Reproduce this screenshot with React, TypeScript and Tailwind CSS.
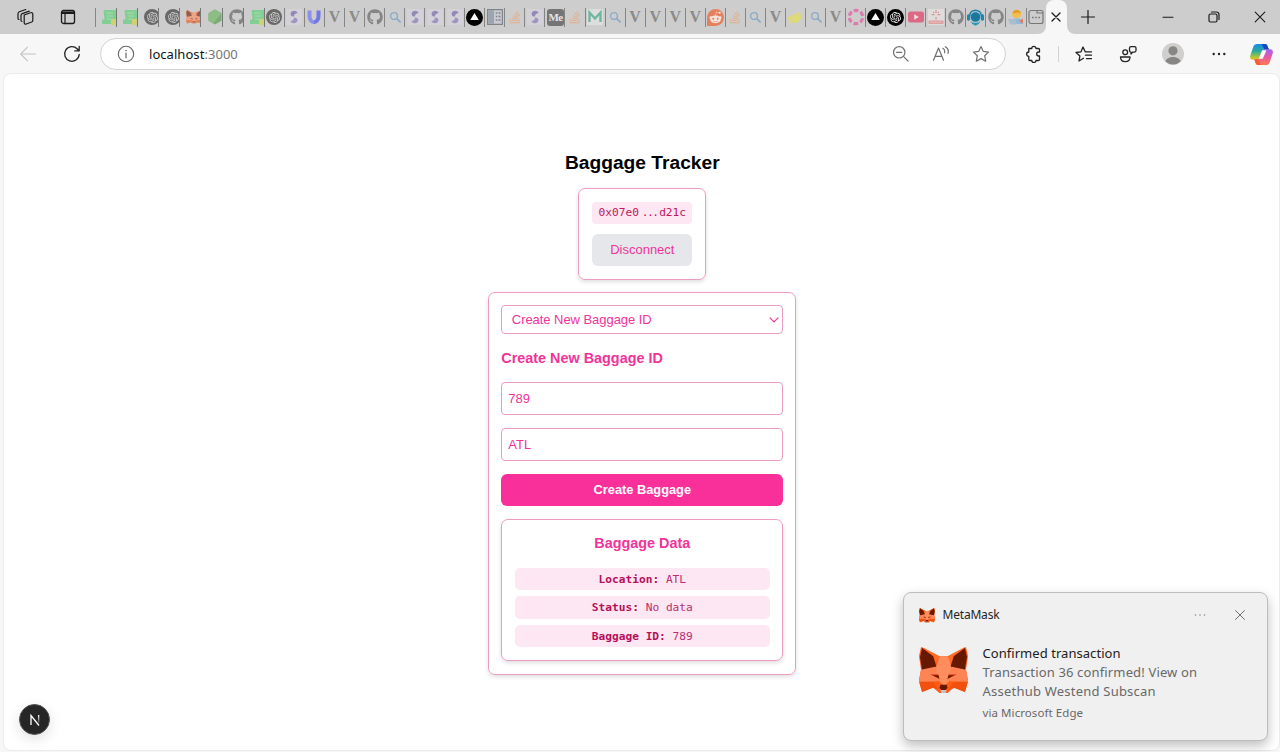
import React from 'react';
import { FaGithub, FaRedditAlien, FaStackOverflow } from 'react-icons/fa';
import { SiOpenai } from 'react-icons/si';

const line = { fill: 'none', stroke: 'currentColor', strokeLinecap: 'round', strokeLinejoin: 'round' } as const;

function Fox({ className }: { className: string }) {
  return (
    <svg viewBox="0 0 48 46" preserveAspectRatio="none" className={className}>
      <path d="M2 0 20 9h9L46 0l2 9-2 13 2 10-3 12-11-4-6 5h-8l-6-5-11 4L0 32l2-10L0 9z" fill="#ff5c16" />
      <path d="M20 9h9l3 13-3 12-4 4-5-4-4-12z" fill="#ff8d5d" />
      <path d="m2 22 14-3 5 14-9 1H0zM46 22l-14-3-5 14 9 1h12z" fill="#ff8455" />
      <path d="m0 34 14 0 5 7-6-1-10 4zM48 34l-14 0-5 7 6-1 10 4z" fill="#f2500f" />
      <path d="m3 0 17 9-5 8zM45 0 28 9l5 8z" fill="#ff6a25" />
      <path d="m3 1-2 9 2 12 14-3-3-10zM45 1l2 9-2 12-14-3 3-10z" fill="#661800" />
      <path d="m11 27 8 0 1 4zM37 27l-8 0-1 4z" fill="#b83205" />
      <path d="m14 28 5 0 1 3zM34 28l-5 0-1 3z" fill="#661800" />
      <path d="M21 37h6l1 3-2 2h-4l-2-2z" fill="#661800" />
      <path d="M21 42h6l-1 3h-4z" fill="#c0c4cd" />
    </svg>
  );
}

function Vercel() {
  return (
    <svg viewBox="0 0 16 16" className="size-4.25 shrink-0">
      <circle cx="8" cy="8" r="8" fill="#000" />
      <path d="m8 3.8 4 6.6H4z" fill="#fff" />
    </svg>
  );
}

function Search() {
  return (
    <svg viewBox="0 0 16 16" className="size-4 shrink-0 text-[#8babc8]">
      <circle cx="7" cy="7" r="3.4" {...line} strokeWidth="1.4" />
      <path d="m9.7 9.7 3.4 3.2" {...line} strokeWidth="1.8" />
    </svg>
  );
}

function Script() {
  return (
    <svg viewBox="0 0 16 16" className="size-4 shrink-0">
      <path d="M1.500 1H14v14H0v-4l2.500-1z" fill="#82ce93" />
      <path d="M4 4h7M5 7h6M5 10h4" stroke="#a5dbaf" strokeWidth="1" />
      <path d="M9 10h6v6H9z" fill="#d0d176" />
    </svg>
  );
}

function Swirl() {
  return (
    <svg viewBox="0 0 16 16" className="size-4 shrink-0">
      <path d="M0 0h16v16H0z" fill="#d4d2d8" />
      <path d="M11.600 4C10.600 1 5 1 4.600 4.400c-.3 2.300 1.400 3.200 3.400 3.200 0-2 1-3.200 3.600-3.600z" fill="#928bb8" />
      <path d="M4.400 12c1 3 6.600 3 7-.4.3-2.300-1.400-3.200-3.400-3.200 0 2-1 3.200-3.600 3.600z" fill="#9c95c2" />
    </svg>
  );
}

function Favicon({ name }: { name: string }) {
  switch (name) {
    case 'script':
      return <Script />;
    case 'openai':
      return (
        <span className="flex size-4 shrink-0 items-center justify-center rounded-full bg-[#686868] text-[#d3d3d3]">
          <SiOpenai size={11} />
        </span>
      );
    case 'openai-dark':
      return (
        <span className="flex size-4.25 shrink-0 items-center justify-center rounded-full bg-black text-white">
          <SiOpenai size={11} />
        </span>
      );
    case 'fox':
      return <Fox className="h-3.5 w-4 shrink-0 opacity-60" />;
    case 'node':
      return (
        <svg viewBox="0 0 16 16" className="size-4 shrink-0">
          <path d="m8 .5 6.500 3.700v7.600L8 15.500l-6.500-3.700V4.200z" fill="#7dab76" />
          <path d="m8 .5 6.500 3.700L6 14.400l-4.500-2.600V4.200z" fill="#8dbc85" />
        </svg>
      );
    case 'github':
      return <FaGithub size={16} className="shrink-0 text-[#858585]" />;
    case 'swirl':
      return <Swirl />;
    case 'u':
      return (
        <svg viewBox="0 0 16 16" className="size-4 shrink-0">
          <path d="M1.500 1.500h4v6c0 2 .8 3 2.500 4v3.500C4 14.400 1.500 11.500 1.500 7z" fill="#8a91e6" />
          <path d="M14.500 1.500h-4v6c0 2-.8 3-2.500 4v3.500c4-.6 6.500-3.500 6.500-8z" fill="#7078e2" />
        </svg>
      );
    case 'v':
      return <span className="font-['Liberation_Serif',serif] text-[16px] leading-4 font-bold text-[#8a8a8a]">V</span>;
    case 'search':
      return <Search />;
    case 'vercel':
      return <Vercel />;
    case 'panel':
      return (
        <svg viewBox="0 0 16 16" className="size-4 shrink-0">
          <path d="M.6.6h14.800v14.800H.6z" fill="#c8cbd0" stroke="#7f848b" strokeWidth="1.200" />
          <path d="M1.200 1.200H7v13.600H1.200z" fill="#9ba5b0" />
          <path d="M8.800 4h1.500M8.800 7.500h1.500M8.800 11h1.500M11.500 4h2M11.500 7.500h2M11.500 11h2" stroke="#7f848b" strokeWidth="1.300" />
        </svg>
      );
    case 'stack':
      return <FaStackOverflow size={14} className="shrink-0 text-[#dcb597]" />;
    case 'medium':
      return (
        <span className="ml-px flex size-4.25 shrink-0 items-center justify-center rounded-[3px] bg-[#757575] font-['Liberation_Serif',serif] text-[11px] leading-4 font-bold tracking-[-0.600px] text-[#e6e6e6]">
          Me
        </span>
      );
    case 'moralis':
      return (
        <svg viewBox="0 0 16 16" className="size-4 shrink-0">
          <path d="M0 0h16v16H0z" fill="#dedede" />
          <path d="M2.500 13V3.500L8 9.500l5.500-6V13" fill="none" stroke="#70b7a2" strokeWidth="2.400" />
        </svg>
      );
    case 'reddit':
      return (
        <span className="flex size-4.25 shrink-0 items-center justify-center rounded-full rounded-bl-[3px] bg-[#e3815f] text-[#f6e5df]">
          <FaRedditAlien size={13} />
        </span>
      );
    case 'note':
      return (
        <svg viewBox="0 0 16 16" className="size-4 shrink-0">
          <path d="m1 8 12-5.500L14.500 9 10 14l-8-.5z" fill="#ddd780" />
          <path d="m6 7 8 1-4 6z" fill="#e0dc74" />
        </svg>
      );
    case 'polkadot':
      return (
        <svg viewBox="0 0 18 18" className="size-4.5 shrink-0">
          <circle cx="9" cy="9" r="6.700" fill="none" stroke="#e07aac" strokeWidth="3.200" strokeDasharray="4.700 2.316" transform="rotate(-110 9 9)" />
        </svg>
      );
    case 'youtube':
      return (
        <svg viewBox="0 0 16 16" className="size-4 shrink-0">
          <rect y="2.500" width="16" height="11" rx="2.500" fill="#dc6a85" />
          <path d="m6.200 5.300 4.600 2.700-4.600 2.700z" fill="#f3dce1" />
        </svg>
      );
    case 'target':
      return (
        <svg viewBox="0 0 16 16" className="size-4 shrink-0">
          <path d="M0 0h16v16H0z" fill="#e1dcdc" />
          <path d="M8 1v3M8 8v2.500M3.500 5.700h3M9.500 5.700h3M5.200 3l1 1M10.800 3l-1 1" stroke="#d89898" strokeWidth="1.300" />
          <path d="M.5 11.500h15V15H.5z" fill="#dba0a0" />
          <path d="M2.500 13.300h11" stroke="#eacccc" strokeDasharray="1.500 .8" />
        </svg>
      );
    case 'headset':
      return (
        <svg viewBox="0 0 16 16" className="size-4.25 shrink-0">
          <path d="M2.500 6.500C2.500-.5 13.500-.5 13.500 6.500" fill="none" stroke="#2084ad" strokeWidth="1.500" />
          <rect x="0" y="5" width="3" height="6" rx="1.400" fill="#2084ad" />
          <rect x="13" y="5" width="3" height="6" rx="1.400" fill="#2084ad" />
          <path d="M3.500 7.500c0-6 9-6 9 0 0 2.500-1.500 4.500-4.500 4.500s-4.500-2-4.500-4.500" fill="#1a789f" />
          <path d="M3 11c1.500 1.600 3 2 5 2s3.500-.4 5-2l-2 3.200-3 1.600-3-1.600z" fill="#2d96bd" />
        </svg>
      );
    case 'person':
      return (
        <svg viewBox="0 0 16 16" className="size-4 shrink-0">
          <circle cx="8.500" cy="5" r="4.300" fill="#f4bd45" />
          <path d="M4.500 4.500C5 .5 10 0 12.500 3l.3 2-2-1.600z" fill="#e59a27" />
          <path d="M3 15v-3l3-2.500h5l4 2.500v3z" fill="#8eb9df" />
          <path d="M0 10h7l2 5.500H2z" fill="#a9bfd0" />
          <path d="m11 12 4-2.500v5z" fill="#ec7954" />
        </svg>
      );
    default:
      return null;
  }
}

const pinnedTabs = ['script', 'script', 'openai', 'openai', 'fox', 'node', 'github', 'script'];
const tabs = [
  'openai', 'swirl', 'u', 'v', 'v', 'github', 'search', 'swirl', 'swirl', 'swirl', 'vercel', 'panel', 'stack',
  'swirl', 'medium', 'stack', 'moralis', 'search', 'v', 'v', 'v', 'v', 'reddit', 'stack', 'search', 'v', 'note',
  'search', 'v', 'polkadot', 'vercel', 'openai-dark', 'youtube', 'target', 'github', 'headset', 'github', 'person',
];

function TabStrip() {
  return (
    <div className="flex h-[34px] items-center bg-[#cdcdcd] text-[#1b1b1b]">
      <div className="flex w-[52px] justify-center">
        <svg viewBox="0 0 18 18" className="size-[18px]">
          <g {...line} strokeWidth="1.200">
            <path d="m7.200 7 6.300-2.300c1-.4 2.300.1 2.300 1.300v6.500c0 .8-.4 1.200-1.100 1.500l-5.400 2c-1.100.4-2.100-.2-2.100-1.300z" />
            <path d="M5 13.500c-.7 0-1-.6-1-1.200V7.600c0-1 .4-1.600 1.300-2l7-2.500" />
            <path d="M2 11.500c-.7 0-1-.6-1-1.200V5.800c0-1 .4-1.600 1.300-2l6.500-2.300" />
          </g>
        </svg>
      </div>
      <div className="flex w-[32px] justify-center">
        <svg viewBox="0 0 16 16" className="size-4">
          <rect x="1.500" y="1.500" width="13" height="13" rx="2" {...line} strokeWidth="1.300" />
          <path d="M1.500 2.500h13v2.500h-13z" fill="currentColor" />
          <path d="M5 5v9" {...line} strokeWidth="1.200" />
        </svg>
      </div>
      <div className="ml-[11px] flex">
        <div className="h-[19px] w-px bg-[#858585]" />
        {pinnedTabs.map((name, i) => (
          <div key={i} className="flex h-[19px] w-[21.100px] items-center overflow-hidden border-r border-[#777] pl-1.5">
            <Favicon name={name} />
          </div>
        ))}
        {tabs.map((name, i) => (
          <div key={i} className="flex h-[19px] w-[20.060px] items-center justify-center overflow-hidden border-r border-[#858585]">
            <Favicon name={name} />
          </div>
        ))}
      </div>
      <div className="flex w-[19px] justify-center">
        <svg viewBox="0 0 16 16" className="size-4 shrink-0 text-[#777]">
          <path d="M1 3.500A2 2 0 0 1 3 1.500h10a2 2 0 0 1 2 2v9a2 2 0 0 1-2 2H3a2 2 0 0 1-2-2zM9 1.500V4h6" {...line} strokeWidth="1.200" />
          <path d="M4 8.500h1.600M7.200 8.500h1.600M10.400 8.500H12" stroke="currentColor" strokeWidth="1.600" />
        </svg>
      </div>
      <div className="relative flex h-full w-[21px] items-center justify-center rounded-t-[8px] bg-[#f7f7f7]">
        <div className="absolute bottom-0 -left-2 size-2 overflow-hidden">
          <div className="size-2 rounded-br-[8px] shadow-[0_0_0_8px_#f7f7f7]" />
        </div>
        <div className="absolute -right-2 bottom-0 size-2 overflow-hidden">
          <div className="size-2 rounded-bl-[8px] shadow-[0_0_0_8px_#f7f7f7]" />
        </div>
        <svg viewBox="0 0 10 10" className="relative size-2.5">
          <path d="m1 1 8 8M9 1 1 9" {...line} strokeWidth="1.300" />
        </svg>
      </div>
      <div className="flex w-[43px] justify-center">
        <svg viewBox="0 0 14 14" className="size-3.5">
          <path d="M7 .5v13M.5 7h13" {...line} strokeWidth="1.200" />
        </svg>
      </div>
      <div className="ml-auto flex">
        <div className="flex w-[46px] justify-center">
          <svg viewBox="0 0 12 12" className="size-3">
            <path d="M1 6.200h10" {...line} strokeWidth="1.100" />
          </svg>
        </div>
        <div className="flex w-[46px] justify-center">
          <svg viewBox="0 0 12 12" className="size-3">
            <rect x="1" y="3" width="8" height="8" rx="1.500" {...line} strokeWidth="1.200" />
            <path d="M3.500 1h5a2.500 2.500 0 0 1 2.500 2.500v5" {...line} strokeWidth="1.200" />
          </svg>
        </div>
        <div className="ml-[3px] flex w-[40px] justify-center">
          <svg viewBox="0 0 12 12" className="size-3">
            <path d="m1.200 1.200 9.600 9.600M10.800 1.200l-9.600 9.600" {...line} strokeWidth="1.100" />
          </svg>
        </div>
      </div>
    </div>
  );
}

const starPath = 'M9 1.500l2.300 4.900 5.200.7-3.800 3.700 1 5.400L9 13.600l-4.700 2.600 1-5.400L1.500 7.100l5.200-.7z';

function Toolbar() {
  return (
    <div className="flex h-10 items-center text-[#222]">
      <div className="flex w-14 justify-center">
        <svg viewBox="0 0 18 18" className="size-[18px] text-[#c4c4c4]">
          <path d="M16.500 9H2M8.500 2.200 1.700 9l6.800 6.800" {...line} strokeWidth="1.100" />
        </svg>
      </div>
      <div className="flex w-8 justify-center">
        <svg viewBox="0 0 18 18" className="size-[18px]">
          <path d="M16.200 9.500a7.300 7.300 0 1 1-2.100-5.700l1.900 1.900M16.200 1.500v4.400h-4.400" {...line} strokeWidth="1.300" />
        </svg>
      </div>
      <div className="ml-3 flex h-8 w-[906px] shrink-0 items-center rounded-full border border-[#d2d2d2] bg-white">
        <svg viewBox="0 0 18 18" className="ml-4 size-[18px] text-[#666]">
          <circle cx="9" cy="9" r="7.700" {...line} strokeWidth="1.100" />
          <path d="M9 8v4.800" {...line} strokeWidth="1.200" />
          <circle cx="9" cy="5.500" r=".8" fill="currentColor" />
        </svg>
        <div className="ml-[14px] w-[120px] pt-px font-['Noto_Sans',sans-serif] text-[13px] tracking-[0.050px] whitespace-nowrap text-[#111]">
          localhost<span className="text-[#757575]">:3000</span>
        </div>
        <div className="ml-auto flex pr-[4px] text-[#707070]">
          <div className="flex w-10 justify-center">
            <svg viewBox="0 0 18 18" className="size-[18px]">
              <path d="M11.700 11.700 16 16M4.500 7.300h5.300" {...line} strokeWidth="1.200" />
              <circle cx="7.200" cy="7.300" r="5.700" {...line} strokeWidth="1.200" />
            </svg>
          </div>
          <div className="flex w-10 justify-center">
            <svg viewBox="0 0 18 18" className="size-[18px]">
              <path d="M1.500 15.300 6.500 3l5 12.300M3.200 11.300h6.600M10.800 3.300c1.500.8 2.200 2.500 1.800 4.500M13.300 1.700c2.500 1.400 3.500 4 2.700 6.700" {...line} strokeWidth="1.200" />
            </svg>
          </div>
          <div className="flex w-10 justify-center">
            <svg viewBox="0 0 18 18" className="size-[18px]">
              <path d={starPath} {...line} strokeWidth="1.200" />
            </svg>
          </div>
        </div>
      </div>
      <div className="ml-[5px] flex w-[46px] justify-center">
        <svg viewBox="0 0 18 18" className="size-[18px]">
          <path d="M3.800 3.500h3a2.100 2.100 0 0 1 4.200 0h2.500q1 0 1 1v2.500h-.8a2 2 0 0 0 0 4h.8v3.500q0 1-1 1H11a2.100 2.100 0 0 1-4.200 0H4.800q-1 0-1-1V11.300a2.150 2.150 0 0 1 0-4.300z" {...line} strokeWidth="1.300" />
        </svg>
      </div>
      <div className="ml-px h-4 w-px bg-[#d2d2d2]" />
      <div className="ml-[2px] flex w-[45px] justify-center">
        <svg viewBox="0 0 18 18" className="size-[18px]">
          <path d="M8.500 13.200 4 16l.9-5L1 7.500l5-.7L8 2l2.200 4.800h6.300M10.500 10.200h6M11.500 13.600h5" {...line} strokeWidth="1.300" />
        </svg>
      </div>
      <div className="flex w-[43px] justify-center">
        <svg viewBox="0 0 18 18" className="size-[18px]">
          <circle cx="6.200" cy="7.300" r="2.400" {...line} strokeWidth="1.300" />
          <path d="M1.500 12h9.500c0 3-1.500 4.700-4.700 4.700S1.500 15 1.500 12M10.500 3.200c0-1 .6-1.600 1.500-1.600h3.500c.9 0 1.500.6 1.500 1.500v2.500c0 .9-.6 1.500-1.500 1.500h-1.800L12 9V7.100c-.9 0-1.500-.6-1.500-1.500z" {...line} strokeWidth="1.300" />
        </svg>
      </div>
      <div className="flex w-[48px] justify-center">
        <svg viewBox="0 0 22 22" className="size-[22px]">
          <circle cx="11" cy="11" r="11" fill="#d0cfcd" />
          <circle cx="11" cy="7.800" r="4.600" fill="#888683" />
          <path d="M3.500 18.500c.8-6 14.200-6 15 0a11 11 0 0 1-15 0" fill="#888683" />
        </svg>
      </div>
      <div className="flex w-[44px] justify-center">
        <svg viewBox="0 0 14 4" className="h-1 w-3.5">
          <circle cx="1.700" cy="2" r="1.200" fill="currentColor" />
          <circle cx="7" cy="2" r="1.200" fill="currentColor" />
          <circle cx="12.300" cy="2" r="1.200" fill="currentColor" />
        </svg>
      </div>
      <div className="flex w-[39px] justify-center pl-px">
        <svg viewBox="0 0 24 22" className="h-[21px] w-[23px]">
          <defs>
            <linearGradient id="cpBlue" x1="0" y1="0" x2="0" y2="1">
              <stop offset="0" stopColor="#168bea" />
              <stop offset=".45" stopColor="#29a99d" />
              <stop offset=".8" stopColor="#a5c63c" />
              <stop offset="1" stopColor="#f5be20" />
            </linearGradient>
            <linearGradient id="cpPink" x1="0" y1="0" x2="0" y2="1">
              <stop offset="0" stopColor="#a263f2" />
              <stop offset=".5" stopColor="#e85aa4" />
              <stop offset="1" stopColor="#ff7a50" />
            </linearGradient>
          </defs>
          <path d="M15.500 0c2 0 2.500 1.200 3.200 3.300L20 6h-5c-2 0-2.800 1.200-3.300 2.700L9.500 15c-.5 1.200-1 1.500-2 1.500H3c-2.500 0-3.500-2-2.700-4.500L3.200 3.500C4 1 5.300 0 7.500 0z" fill="url(#cpBlue)" />
          <path d="M15.500 0c2 0 2.500 1.200 3.200 3.300L20 6h-5l-2-4.500C12.500.5 12 0 11 0z" fill="#1747bd" />
          <path d="M8.500 22c-2 0-2.500-1.200-3.200-3.300L4.500 16h4c2 0 2.800-1.200 3.300-2.700L14 7c.5-1.200 1-1.500 2-1.500h5c2.500 0 3.500 2 2.700 4.500l-2.900 8.500C20 21 18.700 22 16.500 22z" fill="url(#cpPink)" />
          <path d="M8.500 22c-2 0-2.500-1.200-3.200-3.300L4.500 16h4l2 4.500c.5 1 1 1.500 2 1.500z" fill="#f45d35" />
          <path d="M13.800 6.500h3.400l-3.800 9h-3.200z" fill="#fff" />
        </svg>
      </div>
    </div>
  );
}

function DataRow({ label, value }: { label: string; value: string }) {
  return (
    <p className="h-[22.400px] rounded-[5px] bg-[#fce7f3] text-center font-['DejaVu_Sans_Mono',monospace] text-[11.200px] leading-[24.400px] text-[#be2c70]">
      <strong className="font-bold text-[#b80f5a]">{label}:</strong> {value}
    </p>
  );
}

function Tracker() {
  return (
    <main className="flex flex-col items-center pl-[1.600px] font-['Liberation_Sans',Arial,sans-serif] text-[#f0349a]">
      <h1 className="mt-[75px] text-[19.200px] leading-[27px] font-bold text-black">Baggage Tracker</h1>
      <section className="mt-[12px] flex h-[91.500px] w-[128px] flex-col rounded-[7px] border border-[#ee9bc4] p-[13px] shadow-[0_2px_4px_rgba(0,0,0,0.130)]">
        <div className="flex h-[22px] items-center justify-center rounded-[4px] bg-[#fce7f3] pt-[2px] font-['DejaVu_Sans_Mono',monospace] text-[11.200px] text-[#be185d]">
          <span>0x07e0</span>
          <span className="w-[20.200px] pl-px text-center tracking-[-1.500px]">...</span>
          <span>d21c</span>
        </div>
        <button className="mt-[10px] h-8 shrink-0 rounded-[6px] bg-[#e5e7eb] text-[13px]">Disconnect</button>
      </section>
      <section className="mt-[12.500px] flex h-[383px] w-[308px] flex-col rounded-[7px] border border-[#ee9bc4] px-[12px] pt-[12px] shadow-[0_2px_4px_rgba(0,0,0,0.130)]">
        <button className="flex h-[29px] w-full shrink-0 items-center justify-between rounded-[4px] border border-[#ee9bc4] pr-[3px] pl-[9.500px] text-[13px] tracking-[-0.050px]">
          Create New Baggage ID
          <svg viewBox="0 0 10 6" className="h-1.5 w-2.5">
            <path d="m1 .8 4 4 4-4" {...line} strokeWidth="1.200" />
          </svg>
        </button>
        <h2 className="mt-[12px] text-[14.400px] leading-6 font-bold">Create New Baggage ID</h2>
        <input
          readOnly
          value="789"
          className="mt-[11.500px] h-[33.500px] w-full shrink-0 rounded-[4px] border border-[#ee9bc4] px-[6px] text-[13px] outline-none"
        />
        <input
          readOnly
          value="ATL"
          className="mt-[12.500px] h-[33.500px] w-full shrink-0 rounded-[4px] border border-[#ee9bc4] px-[6px] text-[13px] outline-none"
        />
        <button className="mt-[12.500px] h-8 w-full shrink-0 rounded-[6px] bg-[#f9309a] text-[12.800px] font-bold text-white">
          Create Baggage
        </button>
        <div className="mt-[13px] flex h-[142.500px] w-full shrink-0 flex-col rounded-[7px] border border-[#ee9bc4] px-[12.500px] pt-[12.500px] shadow-[0_2px_4px_rgba(0,0,0,0.130)]">
          <h2 className="mb-[12.500px] text-center text-[14.400px] leading-[23px] font-bold">Baggage Data</h2>
          <div className="flex flex-col gap-[6.400px]">
            <DataRow label="Location" value="ATL" />
            <DataRow label="Status" value="No data" />
            <DataRow label="Baggage ID" value="789" />
          </div>
        </div>
      </section>
    </main>
  );
}

function Notification() {
  return (
    <aside className="absolute top-[592px] left-[902.500px] h-[149px] w-[365px] rounded-[8px] border border-[#bdbdbd] bg-[#f0f0f0] px-[15px] font-['Noto_Sans',sans-serif] shadow-[0_5px_12px_rgba(0,0,0,0.250)]">
      <header className="mt-[11px] flex h-[22px] items-center">
        <Fox className="h-[15px] w-[16px]" />
        <span className="ml-2 text-[12px] tracking-[-0.200px] text-[#242424]">MetaMask</span>
        <svg viewBox="0 0 12 4" className="ml-auto h-1 w-3 text-[#888]">
          <circle cx="1.500" cy="2" r=".8" fill="currentColor" />
          <circle cx="6" cy="2" r=".8" fill="currentColor" />
          <circle cx="10.500" cy="2" r=".8" fill="currentColor" />
        </svg>
        <svg viewBox="0 0 12 12" className="mr-[6px] ml-[28px] size-3 text-[#707070]">
          <path d="m1.500 1.500 9 9M10.500 1.500l-9 9" {...line} strokeWidth="1" />
        </svg>
      </header>
      <div className="mt-[18px] flex">
        <Fox className="mt-[3px] h-[47px] w-[49px]" />
        <div className="ml-[15px] whitespace-nowrap text-[#686868]">
          <p className="text-[13px] leading-[19px] tracking-[0.050px] text-[#202020]">Confirmed transaction</p>
          <p className="text-[13px] leading-[18.500px] tracking-[0.150px]">Transaction 36 confirmed! View on</p>
          <p className="text-[13px] leading-[18.500px] tracking-[0.220px]">Assethub Westend Subscan</p>
          <p className="mt-[3px] text-[11.500px] leading-[19px] tracking-[0.080px]">via Microsoft Edge</p>
        </div>
      </div>
    </aside>
  );
}

export default function App() {
  return (
    <div className="relative flex h-[752px] w-[1280px] flex-col overflow-hidden bg-[#f7f7f7]">
      <TabStrip />
      <Toolbar />
      <div className="-mt-px mb-px ml-[3px] flex-1 rounded-[8px] border border-[#ebebeb] bg-white">
        <Tracker />
      </div>
      <div className="absolute top-[704px] left-[19px] flex size-[31px] items-center justify-center rounded-full border border-[#555] bg-[#262626] shadow-[0_4px_14px_rgba(0,0,0,0.120)]">
        <svg viewBox="0 0 12 12" className="size-3">
          <defs>
            <linearGradient id="nFade" x1="0" y1="0" x2="0" y2="1">
              <stop offset="0" stopColor="#fff" />
              <stop offset="1" stopColor="#fff" stopOpacity=".15" />
            </linearGradient>
          </defs>
          <path d="M2 11V1.500l8 10" fill="none" stroke="#fff" strokeWidth="1.300" />
          <rect x="9" y="1" width="1.300" height="8" fill="url(#nFade)" />
        </svg>
      </div>
      <Notification />
    </div>
  );
}
